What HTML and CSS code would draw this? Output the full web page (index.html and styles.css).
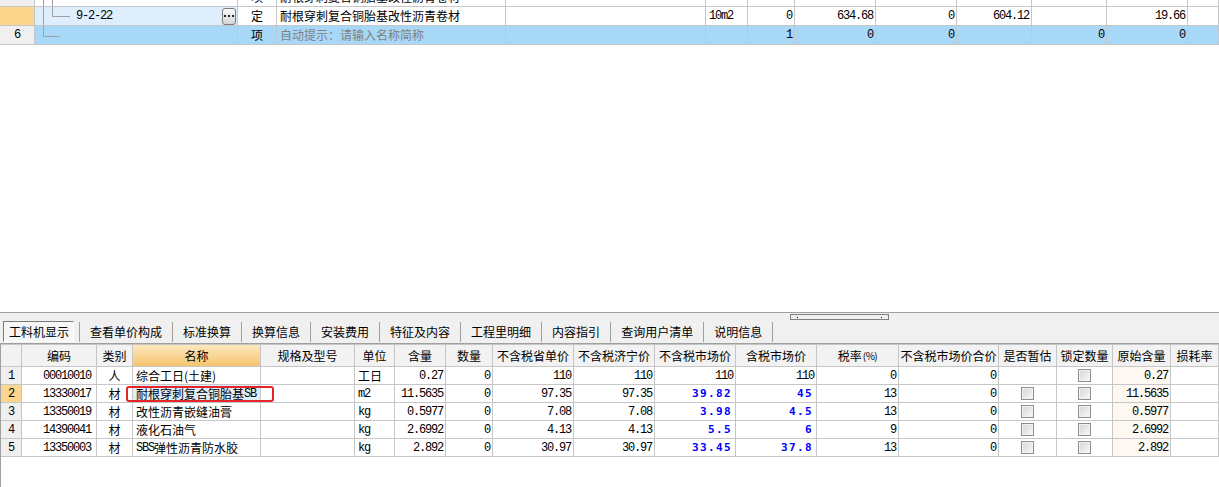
FILE: index.html
```html
<!DOCTYPE html>
<html lang="zh-CN">
<head>
<meta charset="utf-8">
<title>工料机显示</title>
<link rel="stylesheet" href="styles.css">
</head>
<body>
<div class="top">
  <div class="tgrid">
    <div class="trow">
      <div class="c rh"></div>
      <div class="c tree"><svg class="tl" width="41" height="18" viewBox="0 0 41 18"><path d="M8.5 0V18M17.5 0V18" stroke="#a0a0a0" fill="none"/></svg><span class="m">9-2-21</span></div>
      <div class="c ctr">项</div>
      <div class="c">耐根穿刺复合铜胎基改性沥青卷材</div>
      <div class="c"></div><div class="c"></div><div class="c"></div><div class="c"></div><div class="c"></div><div class="c"></div><div class="c"></div><div class="c"></div><div class="c"></div>
    </div>
    <div class="trow">
      <div class="c rh cur"></div>
      <div class="c tree curc"><svg class="tl" width="41" height="18" viewBox="0 0 41 18"><path d="M8.5 0V18M17.5 0V9.5H35" stroke="#a0a0a0" fill="none"/></svg><span class="m">9-2-22</span><span class="dots"><svg width="10" height="3" viewBox="0 0 10 3"><rect x="0" y="0" width="2" height="2" fill="#222"/><rect x="4" y="0" width="2" height="2" fill="#222"/><rect x="8" y="0" width="2" height="2" fill="#222"/></svg></span></div>
      <div class="c ctr">定</div>
      <div class="c">耐根穿刺复合铜胎基改性沥青卷材</div>
      <div class="c"></div>
      <div class="c"><span class="m">10m2</span></div>
      <div class="c r"><span class="m">0</span></div>
      <div class="c r"><span class="m">634.68</span></div>
      <div class="c r"><span class="m">0</span></div>
      <div class="c r"><span class="m">604.12</span></div>
      <div class="c"></div>
      <div class="c r"><span class="m">19.66</span></div>
      <div class="c"></div>
    </div>
    <div class="trow sel">
      <div class="c rh"><span class="m">6</span></div>
      <div class="c tree"><svg class="tl" width="41" height="18" viewBox="0 0 41 18"><path d="M8.5 0V10.5H25" stroke="#a0a0a0" fill="none"/></svg></div>
      <div class="c ctr">项</div>
      <div class="c hint">自动提示：请输入名称简称</div>
      <div class="c"></div>
      <div class="c"></div>
      <div class="c r"><span class="m">1</span></div>
      <div class="c r"><span class="m">0</span></div>
      <div class="c r"><span class="m">0</span></div>
      <div class="c"></div>
      <div class="c r"><span class="m">0</span></div>
      <div class="c r"><span class="m">0</span></div>
      <div class="c"></div>
    </div>
  </div>
</div>

<div class="tabs">
  <span class="grip"></span>
  <div class="tab act">工料机显示</div>
  <div class="tab">查看单价构成</div>
  <div class="tab">标准换算</div>
  <div class="tab">换算信息</div>
  <div class="tab">安装费用</div>
  <div class="tab">特征及内容</div>
  <div class="tab">工程里明细</div>
  <div class="tab">内容指引</div>
  <div class="tab">查询用户清单</div>
  <div class="tab last">说明信息</div>
</div>

<div class="bgrid">
  <div class="brow bhead">
    <div class="c"></div>
    <div class="c ctr">编码</div>
    <div class="c ctr">类别</div>
    <div class="c ctr hname">名称</div>
    <div class="c ctr">规格及型号</div>
    <div class="c ctr">单位</div>
    <div class="c ctr">含量</div>
    <div class="c ctr">数量</div>
    <div class="c ctr">不含税省单价</div>
    <div class="c ctr">不含税济宁价</div>
    <div class="c ctr">不含税市场价</div>
    <div class="c ctr">含税市场价</div>
    <div class="c ctr">税率<span class="sm">(%)</span></div>
    <div class="c ctr">不含税市场价合价</div>
    <div class="c ctr">是否暂估</div>
    <div class="c ctr">锁定数量</div>
    <div class="c ctr">原始含量</div>
    <div class="c ctr">损耗率</div>
  </div>

  <div class="brow">
    <div class="c rh"><span class="m">1</span></div>
    <div class="c r code"><span class="m">00010010</span></div>
    <div class="c ctr">人</div>
    <div class="c">综合工日(土建)</div>
    <div class="c"></div>
    <div class="c">工日</div>
    <div class="c r"><span class="m">0.27</span></div>
    <div class="c r"><span class="m">0</span></div>
    <div class="c r"><span class="m">110</span></div>
    <div class="c r"><span class="m">110</span></div>
    <div class="c r"><span class="m">110</span></div>
    <div class="c r"><span class="m">110</span></div>
    <div class="c r"><span class="m">0</span></div>
    <div class="c r"><span class="m">0</span></div>
    <div class="c ctr"></div>
    <div class="c ctr"><span class="cb"></span></div>
    <div class="c r orig"><span class="m">0.27</span></div>
    <div class="c"></div>
  </div>

  <div class="brow">
    <div class="c rh cur"><span class="m">2</span></div>
    <div class="c r code"><span class="m">13330017</span></div>
    <div class="c ctr">材</div>
    <div class="c curc namec">耐根穿刺复合铜胎基<span class="m">SB</span><span class="hl"></span></div>
    <div class="c"></div>
    <div class="c"><span class="m">m2</span></div>
    <div class="c r"><span class="m">11.5635</span></div>
    <div class="c r"><span class="m">0</span></div>
    <div class="c r"><span class="m">97.35</span></div>
    <div class="c r"><span class="m">97.35</span></div>
    <div class="c r"><span class="b">39.82</span></div>
    <div class="c r"><span class="b">45</span></div>
    <div class="c r"><span class="m">13</span></div>
    <div class="c r"><span class="m">0</span></div>
    <div class="c ctr"><span class="cb"></span></div>
    <div class="c ctr"><span class="cb"></span></div>
    <div class="c r orig"><span class="m">11.5635</span></div>
    <div class="c"></div>
  </div>

  <div class="brow">
    <div class="c rh"><span class="m">3</span></div>
    <div class="c r code"><span class="m">13350019</span></div>
    <div class="c ctr">材</div>
    <div class="c">改性沥青嵌缝油膏</div>
    <div class="c"></div>
    <div class="c"><span class="m">kg</span></div>
    <div class="c r"><span class="m">0.5977</span></div>
    <div class="c r"><span class="m">0</span></div>
    <div class="c r"><span class="m">7.08</span></div>
    <div class="c r"><span class="m">7.08</span></div>
    <div class="c r"><span class="b">3.98</span></div>
    <div class="c r"><span class="b">4.5</span></div>
    <div class="c r"><span class="m">13</span></div>
    <div class="c r"><span class="m">0</span></div>
    <div class="c ctr"><span class="cb"></span></div>
    <div class="c ctr"><span class="cb"></span></div>
    <div class="c r orig"><span class="m">0.5977</span></div>
    <div class="c"></div>
  </div>

  <div class="brow">
    <div class="c rh"><span class="m">4</span></div>
    <div class="c r code"><span class="m">14390041</span></div>
    <div class="c ctr">材</div>
    <div class="c">液化石油气</div>
    <div class="c"></div>
    <div class="c"><span class="m">kg</span></div>
    <div class="c r"><span class="m">2.6992</span></div>
    <div class="c r"><span class="m">0</span></div>
    <div class="c r"><span class="m">4.13</span></div>
    <div class="c r"><span class="m">4.13</span></div>
    <div class="c r"><span class="b">5.5</span></div>
    <div class="c r"><span class="b">6</span></div>
    <div class="c r"><span class="m">9</span></div>
    <div class="c r"><span class="m">0</span></div>
    <div class="c ctr"><span class="cb"></span></div>
    <div class="c ctr"><span class="cb"></span></div>
    <div class="c r orig"><span class="m">2.6992</span></div>
    <div class="c"></div>
  </div>

  <div class="brow">
    <div class="c rh"><span class="m">5</span></div>
    <div class="c r code"><span class="m">13350003</span></div>
    <div class="c ctr">材</div>
    <div class="c"><span class="m">SBS</span>弹性沥青防水胶</div>
    <div class="c"></div>
    <div class="c"><span class="m">kg</span></div>
    <div class="c r"><span class="m">2.892</span></div>
    <div class="c r"><span class="m">0</span></div>
    <div class="c r"><span class="m">30.97</span></div>
    <div class="c r"><span class="m">30.97</span></div>
    <div class="c r"><span class="b">33.45</span></div>
    <div class="c r"><span class="b">37.8</span></div>
    <div class="c r"><span class="m">13</span></div>
    <div class="c r"><span class="m">0</span></div>
    <div class="c ctr"><span class="cb"></span></div>
    <div class="c ctr"><span class="cb"></span></div>
    <div class="c r orig"><span class="m">2.892</span></div>
    <div class="c"></div>
  </div>
</div>
</body>
</html>
```

FILE: styles.css
```css
* { box-sizing: border-box; }

body {
  margin: 0;
  width: 1219px;
  height: 487px;
  overflow: hidden;
  background: #fff;
  color: #000;
  font: 12px/16px "Noto Sans CJK SC", "Noto Sans", sans-serif;
  display: flex;
  flex-direction: column;
}

/* ---------- top grid ---------- */
.top {
  height: 313px;
  flex: none;
  overflow: hidden;
  border-bottom: 1px solid #a0a0a0;
}
.tgrid { margin-top: -12px; }

.trow {
  display: grid;
  grid-template-columns: 35px 203px 39px 229px 200px 42px 47px 81px 81px 75px 75px 81px 31px;
  height: 19px;
  border-bottom: 1px solid #c6c6c6;
}

.c {
  display: flex;
  align-items: center;
  min-width: 0;
  overflow: hidden;
  white-space: nowrap;
  padding: 0 3px;
  border-right: 1px solid #c6c6c6;
}
.r { justify-content: flex-end; }
.ctr { justify-content: center; }
.rh { background: #f0f0f0; justify-content: center; padding: 0; }
.rh.cur { background: #fdd68d; }
.curc { background: #dfeefc; }

.tree { padding: 0 1px 0 0; overflow: visible; }
.tl { flex: none; display: block; }

.dots {
  margin-left: auto;
  flex: none;
  width: 14px;
  height: 17px;
  border: 1px solid #7c7c7c;
  border-radius: 3px;
  background: linear-gradient(#fbfbfb, #d4d4d4);
  display: flex;
  align-items: center;
  justify-content: center;
}
.dots svg { display: block; }

.sel .c { background: #a8d8f8; border-right-color: #c0c8d0; }
.sel .rh { background: #f0f0f0; border-right-color: #c6c6c6; }
.hint { color: #808080; }

.m {
  font-family: "Liberation Mono", monospace;
  font-size: 12px;
  letter-spacing: -1.2px;
}
.r .m { margin-right: -1px; }
.b {
  font-family: "DejaVu Sans Mono", monospace;
  font-size: 11px;
  font-weight: bold;
  letter-spacing: 1.4px;
  color: #0000ff;
}

/* ---------- tabs ---------- */
.tabs {
  position: relative;
  flex: none;
  height: 31px;
  background: #f0f0f0;
  border-bottom: 1px solid #a0a0a0;
  display: flex;
  align-items: flex-end;
  padding: 0 0 1px 3px;
}
.tab {
  height: 20px;
  display: flex;
  align-items: center;
  padding: 0 10px;
  border-left: 1px solid #a0a0a0;
  white-space: nowrap;
}
.tab.act {
  height: 21px;
  border: 1px solid;
  border-color: #7a7a7a #ffffff #ffffff #7a7a7a;
  background: #f6f6f6;
  padding: 0 4px 0 5px;
  margin-right: 5px;
}
.tab.last { border-right: 1px solid #a0a0a0; }

.grip {
  position: absolute;
  left: 790px;
  top: 1px;
  width: 99px;
  height: 6px;
  border: 1px solid #808080;
  background: #f0f0f0;
}
.grip::before,
.grip::after {
  content: "";
  position: absolute;
  top: 2px;
  width: 1px;
  height: 1px;
  background: #000080;
}
.grip::before { left: 6px; }
.grip::after { right: 6px; }

/* ---------- bottom grid ---------- */
.bgrid {
  flex: 1;
  border-left: 1px solid #a0a0a0;
}
.brow {
  display: grid;
  grid-template-columns: 21px 75px 36px 128px 94px 40px 51px 47px 81px 81px 81px 81px 82px 100px 58px 56px 58px 1fr;
  height: 18px;
  border-bottom: 1px solid #c6c6c6;
}
.brow.bhead {
  height: 23px;
  border-top: 1px solid #c6c6c6;
  background: #f2f2f2;
}
.bhead .c { padding: 0; }
.hname { background: linear-gradient(#fde8bf, #f6c46e); }
.sm { font-size: 10px; letter-spacing: -0.5px; margin-left: 1px; }

.code { padding-right: 6px; }
.orig { background: #fdf8f2; }

.namec { position: relative; overflow: visible; }
.hl {
  position: absolute;
  left: -7px;
  top: 1px;
  width: 148px;
  height: 16px;
  border: 2px solid #e3262b;
  border-radius: 3px;
}

.cb {
  width: 13px;
  height: 13px;
  border: 1px solid #8f8f8f;
  background: linear-gradient(135deg, #d4d4d4, #fafafa);
  box-shadow: inset 0 0 0 1px #f2f2f2;
}
```
